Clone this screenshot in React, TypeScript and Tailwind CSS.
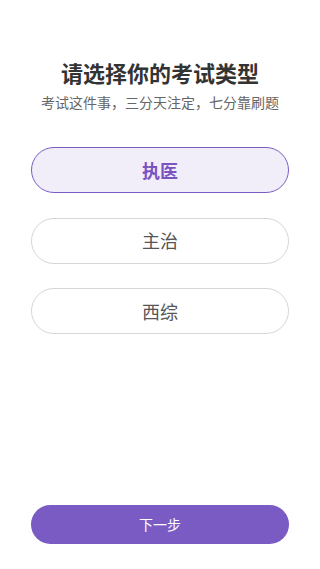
import { useState } from "react";

const types = ["执医", "主治", "西综"];

export default function App() {
  const [selected, setSelected] = useState(0);

  return (
    <div
      className="h-[569px] w-[320px] bg-white flex flex-col px-[31px]"
      style={{ fontFamily: '"Noto Sans CJK SC", "Noto Sans", sans-serif' }}
    >
      <div className="pt-[57px] text-center">
        <h1 className="text-[22px] leading-[30px] font-bold text-[#333333]">请选择你的考试类型</h1>
        <p className="mt-[5px] text-[14px] leading-[20px] text-[#666666]">考试这件事，三分天注定，七分靠刷题</p>
      </div>

      <div className="mt-[35px] flex flex-col gap-[24.5px]">
        {types.map((name, i) => (
          <button
            key={name}
            onClick={() => setSelected(i)}
            className={
              i === selected
                ? "h-[46px] rounded-full border-[1.5px] border-[#7b5cc4] bg-[#f1eefa] text-[18px] font-bold text-[#7b52c1]"
                : "h-[46px] rounded-full border border-[#d6d6d6] bg-white text-[18px] text-[#555555]"
            }
          >
            {name}
          </button>
        ))}
      </div>

      <div className="mt-auto pb-[25px]">
        <button className="h-[39px] w-full rounded-full bg-[#7a5ac3] text-[14px] text-white">下一步</button>
      </div>
    </div>
  );
}
